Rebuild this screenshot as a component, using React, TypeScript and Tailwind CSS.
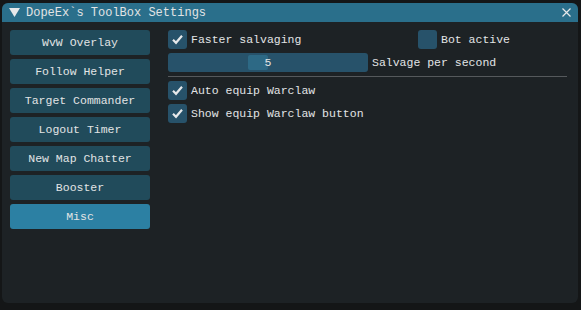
import { useState } from "react";

const tabs = [
  "WvW Overlay",
  "Follow Helper",
  "Target Commander",
  "Logout Timer",
  "New Map Chatter",
  "Booster",
  "Misc",
];

const Check = ({ on }: { on: boolean }) => (
  <span className="flex h-[19px] w-[19px] shrink-0 items-center justify-center rounded-[3px] bg-[#27526a]">
    {on && (
      <svg width="13" height="13" viewBox="0 0 13 13">
        <path d="M2 6.8 L5 9.8 L11 2.8" fill="none" stroke="#e6e8ea" strokeWidth="2.2" />
      </svg>
    )}
  </span>
);

const CheckRow = ({ label, on }: { label: string; on: boolean }) => (
  <div className="flex h-[19px] items-center gap-[4px]">
    <Check on={on} />
    <span>{label}</span>
  </div>
);

export default function App() {
  const [active, setActive] = useState("Misc");

  return (
    <div
      className="h-[310px] w-[581px] bg-[#141617] pt-[3px] pl-[2px] text-[11.5px] text-[#e2e4e5]"
      style={{ fontFamily: '"Liberation Mono", "DejaVu Sans Mono", monospace' }}
    >
      <div className="flex h-[300px] w-[576px] flex-col overflow-hidden rounded-[6px] bg-[#1d2225]">
        {/* title bar */}
        <div className="flex h-[19px] items-center bg-[#2a6f8b] pl-[7px] pr-[7px]">
          <svg width="11" height="9" viewBox="0 0 11 9" className="mr-[6px]">
            <path d="M0 0 H11 L5.5 9 Z" fill="#e6e8ea" />
          </svg>
          <span className="text-[12px]">DopeEx`s ToolBox Settings</span>
          <svg width="9" height="9" viewBox="0 0 9 9" className="ml-auto">
            <path d="M0.5 0.5 L8.5 8.5 M8.5 0.5 L0.5 8.5" stroke="#e6e8ea" strokeWidth="1.2" />
          </svg>
        </div>

        <div className="flex gap-[18px] pt-[8px] pl-[8px]">
          {/* left tab column */}
          <div className="flex w-[140px] flex-col gap-[4px]">
            {tabs.map((t) => (
              <button
                key={t}
                onClick={() => setActive(t)}
                className={
                  "h-[25px] rounded-[3px] text-center " +
                  (active === t ? "bg-[#2c80a3]" : "bg-[#214b5b]")
                }
              >
                {t}
              </button>
            ))}
          </div>

          {/* right content */}
          <div className="flex w-[399px] flex-col gap-[4px]">
            <div className="flex items-center">
              <div className="w-[250px]">
                <CheckRow label="Faster salvaging" on />
              </div>
              <CheckRow label="Bot active" on={false} />
            </div>
            <div className="flex items-center gap-[4px]">
              <div className="relative flex h-[19px] w-[200px] items-center justify-center rounded-[3px] bg-[#27526a]">
                <span className="absolute left-[80px] top-[2px] h-[15px] w-[20px] rounded-[2px] bg-[#2d6985]" />
                <span className="relative">5</span>
              </div>
              <span>Salvage per second</span>
            </div>
            <div className="h-px w-[399px] bg-[#55595c]" />
            <CheckRow label="Auto equip Warclaw" on />
            <CheckRow label="Show equip Warclaw button" on />
          </div>
        </div>
      </div>
    </div>
  );
}
